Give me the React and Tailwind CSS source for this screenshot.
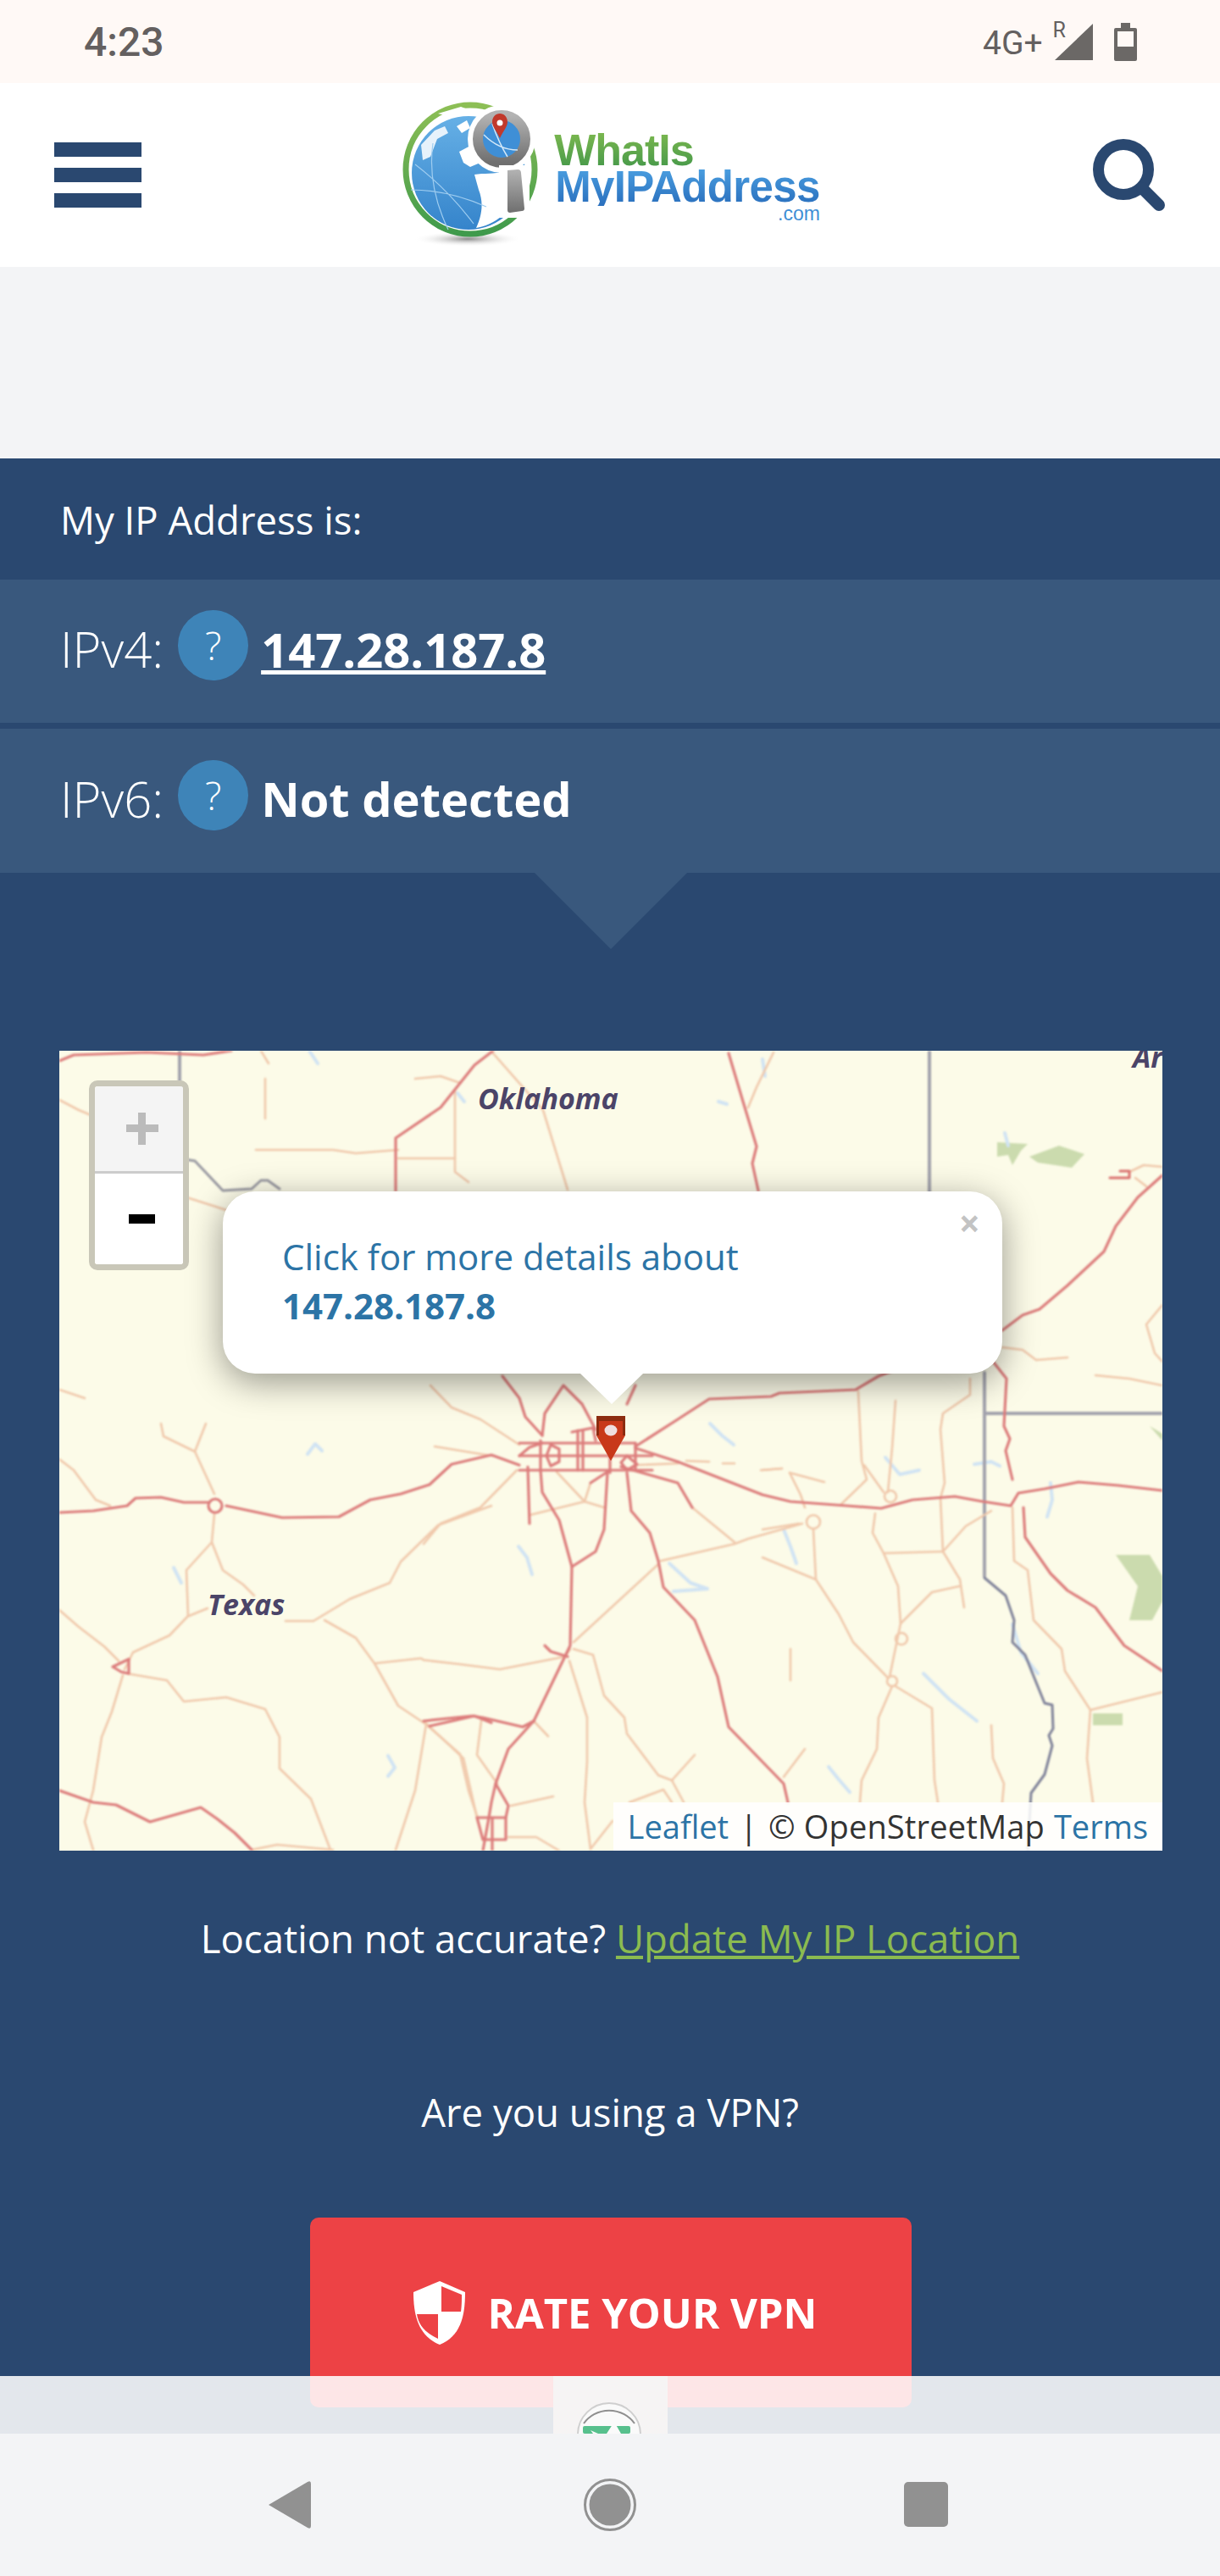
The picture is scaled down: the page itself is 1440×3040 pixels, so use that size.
import React from 'react';

// road traces, in page coordinates (the map svg's viewBox starts at 70,1240)
const majorRoads = [
  '70,1785 110,1783 150,1777 160,1768 190,1767 217,1773 247,1773',
  '267,1777 300,1784 333,1791 400,1790 437,1770 473,1763 507,1752 533,1728 580,1717 613,1729',
  '750,1709 800,1725 900,1764 933,1772 1000,1777 1040,1780 1077,1770 1127,1766 1160,1772 1193,1777 1202,1762 1233,1757 1273,1749 1320,1753 1372,1759',
  '750,1707 800,1675 837,1651 910,1648 920,1644 1010,1640 1037,1624 1100,1600',
  '1183,1570 1207,1552 1227,1545 1260,1517 1303,1477 1317,1447 1343,1413 1372,1387',
  '70,1252 87,1245 173,1242 240,1245 273,1240',
  '467,1405 467,1343 520,1307 560,1257 582,1240',
  '860,1243 877,1300 893,1353 888,1373 895,1405',
  '1173,1608 1188,1627 1185,1683 1192,1698 1187,1712 1195,1746',
  '1208,1779 1210,1814 1240,1857 1260,1877 1293,1897 1327,1942 1372,1972',
  '740,1738 745,1783 767,1809 777,1842 783,1873 820,1912 847,1979 860,2038 925,2105 930,2127',
  '638,1735 640,1761 660,1794 675,1849 673,1942 630,2031 600,2064 585,2105 580,2127 577,2145 570,2184',
  '675,1849 703,1831 713,1805 717,1738',
  '623,1731 625,1798',
  '697,1750 720,1735',
  '733,1731 800,1750 817,1779',
  '593,1624 613,1650 620,1672 640,1694',
  '640,1694 643,1668 665,1635 687,1657 703,1687',
  '740,1657 750,1635',
  '643,1942 650,1949 670,1955',
  '500,2031 557,2025 570,2027 617,2038 630,2031',
  '507,2037 560,2025 580,2033',
  '70,2113 110,2127 137,2130 177,2150 237,2133 257,2147 277,2163 297,2183',
  // city grid
  '613,1703 750,1703', '613,1718 770,1718', '613,1735 770,1735',
  '638,1700 638,1735', '682,1688 682,1735', '688,1688 688,1735', '720,1700 720,1738', '750,1703 750,1735',
  '613,1718 625,1708 640,1703', '740,1718 752,1728 740,1735 733,1726 740,1718',
  '650,1705 660,1710 660,1725 650,1730 645,1718 650,1705', '675,1690 700,1685 703,1700',
  '563,2145 597,2145 597,2171 570,2171 563,2145', '581,2145 581,2184', '585,2105 600,2131 597,2145',
  '133,1967 152,1958 152,1975 143,1973 133,1967',
];

const minorRoads = [
  '70,1298 93,1310 112,1318',
  '308,1240 317,1255', '313,1273 313,1320',
  '302,1357 393,1357 420,1361 470,1357', '470,1367 537,1367', '537,1287 537,1383 553,1395',
  '490,1273 520,1270 543,1278', '217,1412 267,1428',
  '582,1243 641,1310 670,1404', '913,1242 893,1283 883,1307',
  '1333,1383 1350,1375 1372,1377', '1340,1390 1353,1400',
  '1372,1540 1353,1563 1363,1597 1372,1607', '1183,1590 1207,1593 1223,1605 1260,1602',
  '1293,1623 1333,1627 1372,1635', '1195,1779 1197,1842 1213,1853 1220,1912 1253,1946 1257,1972 1287,2018 1283,2075 1290,2127',
  '1287,2018 1372,1997', '1013,1642 1017,1724 1023,1746 993,1775', '1057,1653 1053,1709 1048,1761',
  '1145,1627 1145,1646 1113,1668 1110,1687 1115,1750 1110,1768 1113,1831 1133,1864 1138,1897',
  '1020,1729 1043,1761', '1170,1783 1140,1801 1113,1831', '1113,1831 1043,1833',
  '1033,1786 1030,1809 1043,1833 1060,1872 1063,1916 1050,1979', '1132,1872 1100,1879 1063,1916',
  '1053,1990 1037,2027 1035,2064 1017,2101 1015,2127', '1057,1990 1100,2016 1103,2101 1107,2127',
  '1170,2036 1172,2075 1185,2105 1183,2127', '900,1838 963,1864 990,1905 1007,1938 1047,1979',
  '900,1805 943,1798', '960,1805 963,1864', '933,1946 933,1983', '900,1735 923,1733',
  '932,1738 973,1749', '932,1738 945,1764 950,1779', '925,2097 950,2064',
  '817,1779 867,1820', '625,1788 690,1772 713,1779', '690,1772 697,1750', '657,1737 690,1772',
  '750,1729 800,1727', '810,1724 837,1725', '853,1727 867,1727', '898,1735 923,1733',
  '500,1822 520,1798 567,1779 610,1735', '513,1707 580,1718', '508,1635 533,1661 567,1675 613,1705',
  '780,1842 867,1822 883,1816 947,1798', '777,1846 677,1938',
  '500,1959 543,1964 590,1970 667,1955 673,1946',
  '677,1946 700,1953 713,2001 737,2027 740,2046 777,2095 793,2101 807,2127', '793,2101 820,2071',
  '672,1960 693,2027 693,2079 690,2127 697,2182', '630,2031 647,2049', '568,2031 563,2071 587,2105',
  '500,2031 547,2075 563,2145', '603,2131 653,2120', '600,2168 633,2168 660,2184',
  '743,2127 783,2112 793,2127', '697,2182 723,2149',
  '70,1722 87,1735 113,1770 130,1777', '190,1680 193,1695 230,1713 253,1763', '243,1680 230,1713',
  '253,1787 250,1820 220,1853 222,1907 200,1930 157,1950 147,1970', '250,1820 263,1853 287,1870 300,1883',
  '223,1907 245,1898', '337,1913 370,1913 413,1887 460,1868 473,1843 517,1800 580,1777',
  '383,1912 420,1933 442,1963 470,2013 503,2035 543,2070 553,2113 563,2143',
  '442,1963 497,1957 500,1959', '503,2035 490,2113 467,2183',
  '70,1900 93,1920 123,1943 140,1960', '145,1977 132,2020 120,2050 110,2113 100,2150 110,2183',
  '150,1975 197,1983 217,2008 267,2003 313,2017 330,2050 330,2087 367,2123 390,2183',
  '297,2183 327,2177 393,2183', '70,1640 100,1650',
];

// thin blue strokes read closer to the tile's water than filled blobs
const lakes = [
  '363,1716 372,1704 380,1712', '458,2072 466,2086 458,2096',
  '838,1680 852,1694 866,1705', '1090,1975 1120,2005 1153,2031',
  '978,2085 990,2100 1003,2115', '925,1805 933,1825 940,1845',
  '790,1845 815,1868 835,1875 795,1878', '1195,1917 1205,1950 1225,1975',
  '612,1825 622,1838 628,1858', '1150,1728 1170,1725 1180,1730',
  '1240,1750 1242,1770 1236,1790', '1045,1720 1062,1740 1085,1735',
  '900,1250 903,1270', '1186,1337 1190,1352', '848,1300 858,1303',
  '365,1240 375,1255', '540,1290 548,1300', '205,1850 214,1868',
];

const parks = [
  '1317,1835 1357,1835 1372,1860 1372,1890 1360,1912 1333,1912 1343,1872',
  '1177,1348 1213,1350 1205,1358 1195,1375 1190,1363 1177,1365',
  '1215,1365 1250,1352 1280,1362 1265,1378 1225,1372',
  '1357,1683 1372,1692 1372,1700',
  '1290,2022 1325,2022 1325,2036 1290,2036',
];

const MapTiles = () => (
  <svg viewBox="70 1240 1302 944" className="absolute inset-0 w-[1302px] h-[944px] blur-[0.8px]" fill="none" strokeLinejoin="round" strokeLinecap="round">
    {parks.map((p, i) => <polygon key={i} points={p} fill="#cbdbae" />)}
    {lakes.map((p, i) => <polyline key={i} points={p} stroke="#d0e3f3" strokeWidth="4" />)}
    <path d="M1097 1240V1410M1162 1620V1860H1162M1162 1668H1372M212 1240V1290" stroke="#a3a3ad" strokeWidth="4" />
    <polyline points="217,1368 230,1370 263,1405 297,1403 308,1393 316,1393 330,1403" stroke="#9a9aa2" strokeWidth="3" />
    <polyline points="1162,1862 1187,1883 1197,1912 1195,1938 1210,1953 1222,1983 1233,2010 1242,2012 1243,2040 1238,2048 1242,2060 1233,2094 1217,2116 1213,2184" stroke="#7f8299" strokeWidth="3" />
    {minorRoads.map((p, i) => <polyline key={i} points={p} stroke="#f0c8ab" strokeWidth="2.6" />)}
    <circle cx="960" cy="1796" r="8" stroke="#f0c8ab" strokeWidth="2.6" />
    <circle cx="1051" cy="1766" r="7" stroke="#f0c8ab" strokeWidth="2.6" />
    <circle cx="1064" cy="1934" r="7" stroke="#f0c8ab" strokeWidth="2.6" />
    <circle cx="1053" cy="1984" r="6" stroke="#f0c8ab" strokeWidth="2.6" />
    {majorRoads.map((p, i) => <polyline key={i} points={p} stroke="#dc7c7b" strokeWidth="3.2" />)}
    <circle cx="254" cy="1777" r="8" stroke="#dc7c7b" strokeWidth="3.2" />
    <polyline points="1310,1390 1333,1390 1333,1382 1322,1382" stroke="#d9706e" strokeWidth="3" />
  </svg>
);

const Logo = () => (
  <div className="flex items-start mr-[20px]">
    <svg viewBox="470 115 175 185" className="w-[175px] h-[185px] shrink-0">
      <defs>
        <linearGradient id="ring" x1="0" y1="0" x2="0" y2="1">
          <stop offset="0" stopColor="#8dbf55" />
          <stop offset="1" stopColor="#3f9a4c" />
        </linearGradient>
        <linearGradient id="globe" x1="0" y1="0" x2="0" y2="1">
          <stop offset="0" stopColor="#66b0e6" />
          <stop offset="1" stopColor="#3584cb" />
        </linearGradient>
        <linearGradient id="steel" x1="0" y1="0" x2="0" y2="1">
          <stop offset="0" stopColor="#b3b3b3" />
          <stop offset="1" stopColor="#6f6f6f" />
        </linearGradient>
        <radialGradient id="drop">
          <stop offset="0" stopColor="#8b8b8b" />
          <stop offset="1" stopColor="#ffffff" stopOpacity="0" />
        </radialGradient>
      </defs>
      <ellipse cx="553" cy="283" rx="64" ry="9" fill="url(#drop)" />
      <circle cx="556" cy="201" r="76" fill="none" stroke="url(#ring)" strokeWidth="7" />
      <circle cx="554" cy="205" r="67" fill="url(#globe)" />
      {/* land */}
      <path d="M561 207C572 205 585 207 596 203L605 235L600 248C590 262 575 268 563 270C570 255 572 240 566 225Z" fill="#fff" />
      <path d="M498 172L514 155L526 150L530 158L517 165L509 186L500 190Z" fill="#e7f2fb" />
      <path d="M518 135L545 127L556 131L533 139ZM540 150L552 143L556 152L546 158Z" fill="#fff" />
      <path d="M543 180L558 172L575 190L556 198L548 193Z" fill="#fff" />
      <path d="M491 195Q530 225 560 265M512 170Q505 220 530 272M486 225Q530 225 575 245" fill="none" stroke="#9fcdf0" strokeWidth="1.2" />
      {/* lens */}
      <circle cx="593" cy="165" r="40" fill="#fff" />
      <circle cx="593" cy="165" r="28" fill="#3f8fd6" stroke="url(#steel)" strokeWidth="12" />
      <path d="M572 160Q590 178 612 178M582 147Q590 170 600 186" fill="none" stroke="#d3e8f8" strokeWidth="1.5" />
      <path d="M591 164C586 154 582 150 582 145C582 139 586 135 591 135C596 135 600 139 600 145C600 150 596 154 591 164Z" fill="#c1392b" />
      <circle cx="591" cy="146" r="3.5" fill="#fff" />
      {/* handle */}
      <rect x="590" y="196" width="36" height="62" fill="#fff" />
      <path d="M600 202L612 201C615 201 616 203 616 205L620 247C620 249 619 250 617 250L603 252C601 252 600 251 600 249Z" fill="url(#steel)" />
    </svg>
    <div className="flex flex-col items-end ml-[11px] mt-[41px] font-['Liberation_Sans',sans-serif] font-bold tracking-[-0.6px]">
      <span className="self-start -ml-[1px] text-[52px] leading-[44px] tracking-[-1px] bg-gradient-to-b from-[#7cb84f] to-[#45994a] bg-clip-text text-transparent">WhatIs</span>
      <span className="text-[51px] leading-[44px] bg-gradient-to-b from-[#4a9ee0] to-[#2a6fbd] bg-clip-text text-transparent">MyIPAddress</span>
      <span className="text-[23px] leading-[18px] font-normal tracking-normal text-[#3f8fd6]">.com</span>
    </div>
  </div>
);

const HelpDot = () => (
  <span className="w-[83px] h-[83px] rounded-full bg-[#3e84b8] flex items-center justify-center text-[46px] font-light text-white shrink-0 ml-[17px] mr-[15px] mb-[8px]">?</span>
);

export default function App() {
  return (
    <div className="relative h-[3040px] w-[1440px] overflow-hidden flex flex-col font-['Open_Sans',sans-serif] text-white">
      {/* status bar */}
      <div className="h-[98px] bg-[#fff9f6] flex items-center text-[#646060] font-['Roboto',sans-serif] shrink-0">
        <span className="ml-[99px] mt-[2px] text-[48px] font-medium leading-none">4:23</span>
        <div className="ml-auto flex items-start mr-[98px]">
          <span className="text-[39px] leading-none mt-[5px]">4G+</span>
          <span className="text-[25px] leading-none ml-[12px] -mt-[4px]">R</span>
          <svg viewBox="1245 28 97 45" className="w-[97px] h-[45px] -ml-[13px]" fill="#6b6866">
            <polygon points="1245,72 1290,29 1290,72" />
            <path d="M1323 28H1334V34H1340Q1342 34 1342 36V71Q1342 73 1340 73H1317Q1315 73 1315 71V36Q1315 34 1317 34H1323Z" />
            <rect x="1319" y="38" width="19" height="18" fill="#fff9f6" />
          </svg>
        </div>
      </div>

      {/* site header */}
      <header className="h-[217px] bg-white flex items-center justify-between shrink-0 relative">
        <div className="ml-[64px] flex flex-col gap-[13px]">
          <div className="w-[103px] h-[17px] bg-[#2a4870]" />
          <div className="w-[103px] h-[17px] bg-[#2a4870]" />
          <div className="w-[103px] h-[17px] bg-[#2a4870]" />
        </div>
        <Logo />
        <svg viewBox="0 0 86 86" className="w-[86px] h-[86px] mr-[64px]" fill="none" stroke="#2a4870">
          <circle cx="36" cy="36" r="29.5" strokeWidth="13" />
          <path d="M58 58L78 78" strokeWidth="14" strokeLinecap="round" />
        </svg>
      </header>

      {/* ad gap */}
      <div className="h-[226px] bg-[#f3f4f6] shrink-0" />

      {/* IP section */}
      <section className="flex-1 bg-[#2a4870] flex flex-col">
        <div className="h-[143px] flex items-center pl-[71px] pt-[2px] text-[45.5px]">My IP Address is:</div>
        <div className="flex flex-col gap-[7px]">
          <div className="h-[169px] bg-[#39587d] flex items-center pl-[71px] pb-[6px] text-[56px]">
            <span className="font-light text-[58px]">IPv4:</span>
            <HelpDot />
            <span className="font-bold underline">147.28.187.8</span>
          </div>
          <div className="h-[170px] bg-[#39587d] flex items-center pl-[71px] pb-[6px] text-[56px]">
            <span className="font-light text-[58px]">IPv6:</span>
            <HelpDot />
            <span className="font-bold">Not detected</span>
          </div>
        </div>
        <div className="w-0 h-0 ml-[631px] border-l-[90px] border-r-[90px] border-t-[90px] border-l-transparent border-r-transparent border-t-[#39587d]" />

        {/* map */}
        <div className="relative ml-[70px] mt-[120px] w-[1302px] h-[944px] bg-[#fcfbe8] overflow-hidden shrink-0">
          <MapTiles />
          <span className="absolute left-[494px] top-[33px] text-[34px] leading-[46px] font-bold italic text-[#4b4468]">Oklahoma</span>
          <span className="absolute left-[175px] top-[630px] text-[34px] leading-[46px] font-bold italic text-[#4b4468]">Texas</span>
          <span className="absolute left-[1267px] -top-[16px] text-[34px] leading-[46px] font-bold italic text-[#4b4468]">Ar</span>

          {/* zoom control */}
          <div className="absolute left-[35px] top-[35px] w-[118px] h-[224px] border-[7px] border-[#c9c7b8] rounded-[10px] overflow-hidden flex flex-col">
            <div className="h-[103px] bg-[#f4f4f4] border-b-[3px] border-[#cccccc] flex items-center justify-center pl-[7px]">
              <div className="relative w-[38px] h-[38px]">
                <div className="absolute left-[14px] top-0 w-[9px] h-[38px] bg-[#bbbbbb]" />
                <div className="absolute left-0 top-[14px] w-[38px] h-[9px] bg-[#bbbbbb]" />
              </div>
            </div>
            <div className="flex-1 bg-white flex items-center justify-center pl-[7px]">
              <div className="w-[31px] h-[11px] bg-black" />
            </div>
          </div>

          {/* popup */}
          <div className="absolute left-[193px] top-[166px] w-[920px] h-[215px] bg-white rounded-[38px] shadow-[0_10px_42px_rgba(0,0,0,0.4)] pt-[48px] pl-[70px] text-[42px] leading-[58px] text-[#2c74a6]">
            <div>Click for more details about</div>
            <div className="font-bold">147.28.187.8</div>
            <span className="absolute right-[26px] top-[9px] text-[44px] leading-[56px] font-bold text-[#c3c3c3]">×</span>
            <div className="absolute left-[422px] top-[215px] w-0 h-0 border-l-[37px] border-r-[37px] border-t-[36px] border-l-transparent border-r-transparent border-t-white" />
          </div>

          {/* marker */}
          <svg viewBox="0 0 34 53" className="absolute left-[634px] top-[431px] w-[34px] h-[53px]">
            <path d="M0 0H34V23L17 53L0 23Z" fill="#c8391a" />
            <path d="M0 0H34V6H0Z M0 0H3V23H0Z M31 0H34V23H31Z" fill="#8c2c10" />
            <ellipse cx="17" cy="17" rx="7.5" ry="6.5" fill="#efdfe0" />
          </svg>

          {/* attribution */}
          <div className="absolute right-0 bottom-0 h-[57px] w-[648px] bg-white/85 flex items-center justify-end pr-[17px] text-[38px] text-[#333333] whitespace-nowrap">
            <span className="text-[#2c74a6]">Leaflet</span>
            <span className="mx-[13px]">|</span>
            <span className="tracking-[0.15px]">© OpenStreetMap</span>
            <span className="text-[#2c74a6] ml-[11px]">Terms</span>
          </div>
        </div>

        <p className="mt-[71px] text-center text-[45.5px] leading-[64px]">
          Location not accurate? <span className="text-[#8bbb50] underline">Update My IP Location</span>
        </p>
        <p className="mt-[141px] text-center text-[45.5px] leading-[64px]">Are you using a VPN?</p>

        <div className="mt-[93px] ml-[366px] w-[710px] h-[224px] bg-[#ed4245] rounded-[10px] flex items-center justify-center pl-[10px] shrink-0">
          <svg viewBox="488 2687 61 75" className="w-[61px] h-[75px] shrink-0">
            <path d="M519 2687L549 2700C549 2730 543 2752 519 2762C495 2752 488 2730 488 2700Z" fill="#fff" />
            <path d="M521 2693L545 2703C545 2710 545 2716 544 2723H521Z" fill="#ed4245" />
            <path d="M492 2726H517V2755C500 2747 494 2738 492 2726Z" fill="#ed4245" />
          </svg>
          <span className="ml-[27px] text-[49px] leading-none font-bold">RATE YOUR VPN</span>
        </div>
      </section>

      {/* sticky ad strip, sits over the page */}
      <div className="absolute left-0 right-0 bottom-[168px] h-[68px] bg-white/[0.87]">
        <div className="relative ml-[653px] w-[135px] h-[68px] bg-[#f6f4f4] overflow-hidden">
          <svg viewBox="653 2804 135 68" className="w-[135px] h-[68px]">
            <circle cx="719" cy="2873" r="37" fill="#fafafa" stroke="#cfcfcf" strokeWidth="2" />
            <path d="M689 2860A37 37 0 0 1 749 2860" fill="none" stroke="#8f8f8f" strokeWidth="2" />
            <rect x="688" y="2863" width="56" height="9" rx="2" fill="#57c08d" />
            <path d="M697 2868L706 2872H700ZM725 2858L733 2872H716Z" fill="#fafafa" />
          </svg>
        </div>
      </div>

      {/* android nav bar */}
      <div className="absolute left-0 right-0 bottom-0 h-[168px] bg-[#f3f4f6] flex items-center">
        <svg viewBox="0 0 1440 168" className="w-[1440px] h-[168px]" fill="#919191">
          <path d="M317 84L363 57Q367 55 367 59V109Q367 113 363 111L317 84Z" />
          <circle cx="720" cy="84" r="29.5" fill="none" stroke="#919191" strokeWidth="3" />
          <circle cx="720" cy="84" r="24.5" />
          <rect x="1067" y="57" width="52" height="53" rx="5" />
        </svg>
      </div>
    </div>
  );
}
